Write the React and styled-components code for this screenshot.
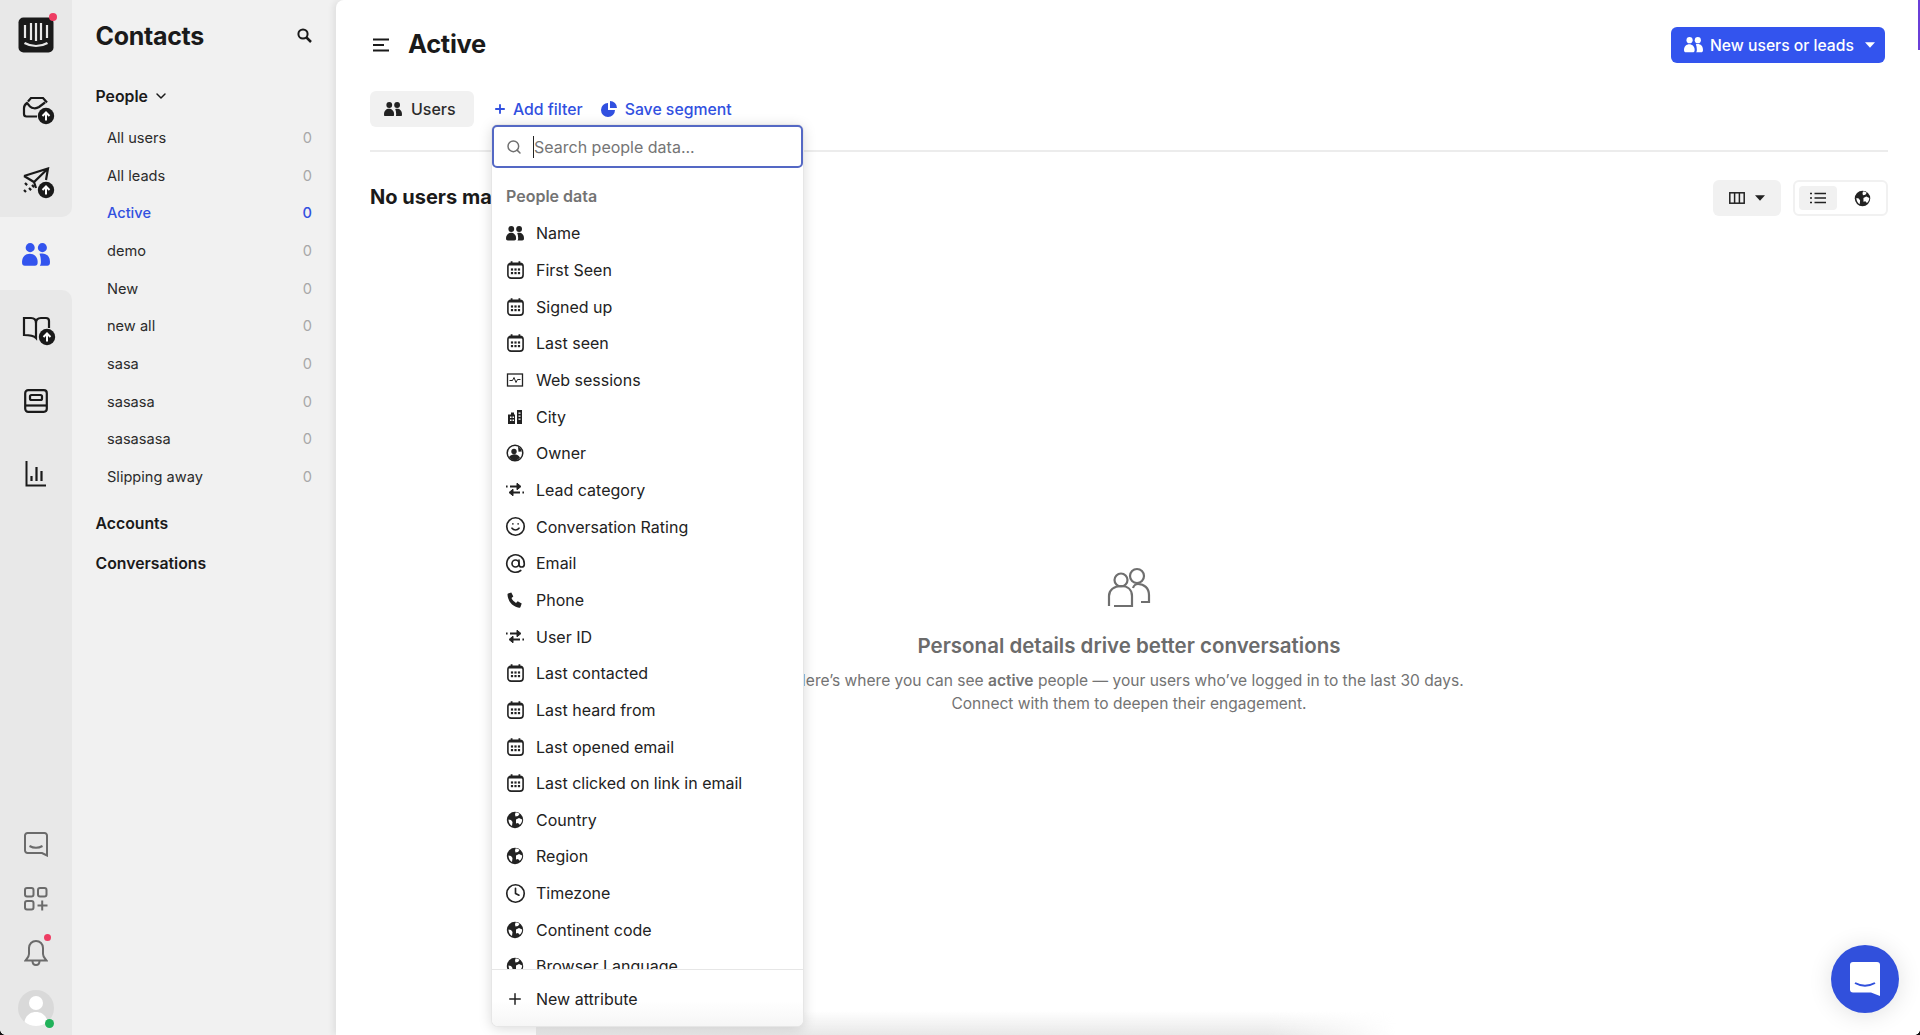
import React from "react";
import styled, { createGlobalStyle } from "styled-components";
import { Search, Plus, AtSign, Clock, Smile, ChevronDown } from "lucide-react";

const INK = "#1a1a1a";
const BLUE = "#3150e0";

const Global = createGlobalStyle`
    html, body {
        margin: 0;
        padding: 0;
        background: #fff;
    }
    body {
        font-family: Inter, "Liberation Sans", sans-serif;
        color: ${INK};
        -webkit-font-smoothing: antialiased;
    }
    * { box-sizing: border-box; }
`;

const Page = styled.div`
    position: relative;
    display: flex;
    width: 1920px;
    height: 1035px;
    overflow: hidden;
    background: #f1f1f1;
`;

/* left icon rail */
const Rail = styled.nav`
    display: flex;
    flex-direction: column;
    width: 72px;
    flex: none;
    background: #f1f1f1;
`;

const RailTop = styled.div`
    height: 217px;
    flex: none;
    display: flex;
    flex-direction: column;
    background: #e8e8e8;
    border-bottom-right-radius: 10px;
`;

const RailLogo = styled.div`
    height: 73px;
    flex: none;
    padding-bottom: 4px;
    display: flex;
    align-items: center;
    justify-content: center;
    position: relative;
`;

const RailItem = styled.div`
    height: ${(p) => p.$h || 72}px;
    flex: none;
    padding: ${(p) => p.$pad || 0};
    display: flex;
    align-items: center;
    justify-content: center;
    color: ${INK};
`;

const RailActive = styled(RailItem)`
    height: 73px;
    padding-top: 2px;
    background: #f1f1f1;
`;

const RailRest = styled.div`
    flex: 1;
    display: flex;
    flex-direction: column;
    background: #e8e8e8;
    border-top-right-radius: 10px;
`;

const RailSpacer = styled.div`
    flex: 1;
`;

const RailFoot = styled.div`
    display: flex;
    flex-direction: column;
    align-items: center;
    color: #6b6b6b;
`;

const FootItem = styled.div`
    position: relative;
    height: 54.5px;
    width: 100%;
    display: flex;
    align-items: center;
    justify-content: center;
`;

const Dot = styled.span`
    position: absolute;
    width: ${(p) => p.$size || 8}px;
    height: ${(p) => p.$size || 8}px;
    border-radius: 50%;
    background: ${(p) => p.$color || "#ee3d63"};
    top: ${(p) => p.$top}px;
    left: ${(p) => p.$left}px;
`;

const Avatar = styled.div`
    width: 36px;
    height: 36px;
    border-radius: 50%;
    background: #d9d9d9;
    overflow: hidden;
`;

/* contacts sidebar */
const Side = styled.aside`
    width: 264px;
    flex: none;
    padding: 0 24px 0 23.5px;
    background: #f1f1f1;
`;

const SideHead = styled.div`
    height: 71px;
    display: flex;
    align-items: center;
    justify-content: space-between;
    color: ${INK};
`;

const SideTitle = styled.h1`
    margin: 0;
    font-size: 25px;
    font-weight: 700;
    letter-spacing: -0.3px;
`;

const Group = styled.div`
    display: flex;
    align-items: center;
    gap: 5px;
    font-size: 15.8px;
    font-weight: 600;
    height: ${(p) => p.$h || 40}px;
`;

const SegList = styled.ul`
    list-style: none;
    margin: -2px 0 8px;
    padding: 0 0 0 11.5px;
`;

const Seg = styled.li`
    height: 37.7px;
    display: flex;
    align-items: center;
    justify-content: space-between;
    font-size: 14.6px;
    color: ${(p) => (p.$active ? BLUE : "#2b2b2b")};
    font-weight: ${(p) => (p.$active ? 500 : 400)};
`;

const Count = styled.span`
    color: ${(p) => (p.$active ? BLUE : "#a8a8a8")};
`;

/* main pane */
const Main = styled.main`
    position: relative;
    flex: 1;
    min-width: 0;
    background: #fff;
    padding: 27px 32px 0 34px;
    border-top-left-radius: 8px;
    box-shadow: -3px 0 6px rgba(0, 0, 0, 0.07);
`;

const TopBar = styled.div`
    display: flex;
    align-items: center;
    height: 36px;
`;

const MenuToggle = styled.svg`
    flex: none;
    margin-left: 3px;
`;

const PageTitle = styled.h2`
    margin: 0 0 3px 19px;
    font-size: 25.5px;
    font-weight: 700;
    letter-spacing: -0.3px;
    flex: 1;
`;

const PrimaryButton = styled.button`
    display: flex;
    align-items: center;
    height: 36px;
    width: 214px;
    margin-right: 3px;
    padding: 0 0 0 13px;
    gap: 7px;
    border: 0;
    border-radius: 6px;
    background: #3354ee;
    color: #fff;
    font: 500 15.7px Inter, sans-serif;
    svg:last-child {
        margin-left: 4px;
    }
`;

const FilterBar = styled.div`
    display: flex;
    align-items: center;
    margin-top: 28px;
    height: 36px;
`;

const UsersPill = styled.div`
    display: flex;
    align-items: center;
    gap: 9px;
    width: 104px;
    height: 36px;
    padding-left: 14px;
    border-radius: 6px;
    background: #f1f1f1;
    font-size: 16px;
    font-weight: 500;
    color: #2b2b2b;
`;

const LinkButton = styled.div`
    display: flex;
    align-items: center;
    gap: ${(p) => p.$gap || 6}px;
    margin-left: ${(p) => p.$ml}px;
    color: ${BLUE};
    font-size: 15.8px;
    font-weight: 500;
`;

const Rule = styled.div`
    height: 2px;
    margin: 23px 0 0;
    background: #ececec;
`;

const ResultBar = styled.div`
    display: flex;
    align-items: center;
    margin-top: 28px;
    height: 36px;
`;

const NoUsers = styled.div`
    flex: 1;
    padding-bottom: 2px;
    font-size: 20px;
    font-weight: 700;
    color: ${INK};
`;

const ColumnsButton = styled.div`
    display: flex;
    align-items: center;
    justify-content: center;
    gap: 10px;
    width: 68px;
    height: 36px;
    border-radius: 6px;
    background: #f1f1f1;
`;

const ViewSwitch = styled.div`
    display: flex;
    align-items: center;
    width: 95px;
    height: 36px;
    margin-left: 12px;
    padding: 0 4px;
    border: 2px solid #f1f1f1;
    border-radius: 6px;
`;

const ViewOption = styled.div`
    width: 38px;
    height: 24px;
    display: flex;
    align-items: center;
    justify-content: center;
    border-radius: 4px;
    background: ${(p) => (p.$active ? "#f1f1f1" : "transparent")};
    margin-right: ${(p) => p.$mr || 0}px;
`;

const Empty = styled.section`
    margin-top: 351px;
    display: flex;
    flex-direction: column;
    align-items: center;
    text-align: center;
    color: #737373;
`;

const EmptyTitle = styled.h3`
    margin: 26px 0 0;
    font-size: 20.5px;
    font-weight: 600;
    color: #6b6b6b;
`;

const EmptyText = styled.p`
    margin: 11px 0 0;
    font-size: 15.55px;
    line-height: 23px;
    b {
        font-weight: 600;
    }
`;

/* people data dropdown */
const Popover = styled.div`
    position: absolute;
    left: 156px;
    top: 125px;
    width: 311px;
    height: 901px;
    display: flex;
    flex-direction: column;
    background: #fff;
    border-radius: 6px;
    box-shadow: 0 0 0 1px #e6e6e6, 0 2px 14px rgba(0, 0, 0, 0.17);
`;

const SearchBox = styled.div`
    flex: none;
    display: flex;
    align-items: center;
    height: 43px;
    padding-left: 11.5px;
    border: 2px solid #5468c4;
    border-radius: 5px;
    color: #6f6f6f;
`;

const Caret = styled.span`
    width: 1.5px;
    height: 22px;
    margin-left: 11px;
    background: #222;
`;

const SearchInput = styled.input`
    flex: 1;
    min-width: 0;
    border: 0;
    outline: 0;
    padding: 0;
    background: transparent;
    font: 400 16px Inter, sans-serif;
    color: #222;
    &::placeholder {
        color: #757575;
    }
`;

const PopScroll = styled.div`
    flex: 1;
    min-height: 0;
    overflow: hidden;
    padding: 16px 0 0 14px;
`;

const PopHeading = styled.div`
    height: 24px;
    display: flex;
    align-items: center;
    font-size: 16px;
    font-weight: 600;
    color: #737373;
    margin-bottom: 7px;
`;

const PopRow = styled.div`
    display: flex;
    align-items: center;
    height: 36.67px;
    gap: 12px;
    font-size: 16px;
    color: #222;
`;

const IconSlot = styled.span`
    flex: none;
    width: 18px;
    height: 18px;
    display: flex;
    align-items: center;
    justify-content: center;
    svg {
        flex: none;
    }
`;

const PopFoot = styled.div`
    flex: none;
    height: 57px;
    padding: 1px 0 0 14px;
    display: flex;
    align-items: center;
    gap: 12px;
    border-top: 1px solid #e6e6e6;
    font-size: 16px;
    color: #222;
    background: linear-gradient(#fff 55%, #f6f6f6);
    border-radius: 0 0 6px 6px;
`;

const BottomGlow = styled.div`
    position: absolute;
    left: 200px;
    width: 860px;
    bottom: 0;
    height: 24px;
    background: linear-gradient(transparent, #e8e8e8);
    mask-image: linear-gradient(to right, #000 85%, transparent);
    pointer-events: none;
`;

const Launcher = styled.div`
    position: absolute;
    right: 21px;
    bottom: 22px;
    width: 68px;
    height: 68px;
    display: flex;
    align-items: center;
    justify-content: center;
    border-radius: 50%;
    background: #3150dc;
    box-shadow: 0 2px 24px rgba(0, 0, 0, 0.12);
`;

const Corner = styled.span`
    position: absolute;
    bottom: 0;
    ${(p) => (p.$right ? "right: 0;" : "left: 0;")}
    width: 5px;
    height: 5px;
    background: ${(p) =>
        p.$right
            ? "radial-gradient(circle at 0 0, transparent 4.5px, #111 5px)"
            : "radial-gradient(circle at 100% 0, transparent 4.5px, #111 5px)"};
`;

const AccentLine = styled.span`
    position: absolute;
    top: 0;
    right: 0;
    width: 2px;
    height: 50px;
    background: #6a3fd8;
`;

function PeopleIcon({ size = 18, color = "currentColor" }) {
    return (
        <svg width={size} height={size * 0.83} viewBox="0 0 24 20" fill={color}>
            <circle cx="7" cy="4" r="3.9" />
            <circle cx="17.5" cy="4" r="3.9" />
            <path d="M0 16c0-4 3-6.8 6.6-6.8s6.8 2.8 6.8 6.8v1.2c0 1.4-.9 2.3-2.3 2.3H2.3C.9 19.5 0 18.6 0 17.2z" />
            <path d="M15 9.3c.8-.2 1.6-.3 2.4-.3 3.8 0 6.6 2.8 6.6 6.8v1.4c0 1.4-.9 2.3-2.3 2.3H15.3c.6-.7.9-1.5.9-2.4v-1.5c0-2.4-.5-4.6-1.2-6.3z" />
        </svg>
    );
}

function Calendar() {
    return (
        <svg width="17" height="18" viewBox="0 0 17 18" fill="none" stroke="#222">
            <rect x=".9" y="2.4" width="15.2" height="14.7" rx="3.2" strokeWidth="1.6" />
            <path d="M4.6 .3v2.5M12.4 .3v2.5M2 3.6h13" strokeWidth="1.8" />
            <g fill="#222" stroke="none">
                <rect x="3.9" y="7.4" width="2.2" height="2.2" />
                <rect x="7.4" y="7.4" width="2.2" height="2.2" />
                <rect x="10.9" y="7.4" width="2.2" height="2.2" />
                <rect x="3.9" y="11" width="2.2" height="2.2" />
                <rect x="7.4" y="11" width="2.2" height="2.2" />
                <rect x="10.9" y="11" width="2.2" height="2.2" />
            </g>
        </svg>
    );
}

function Pulse() {
    return (
        <svg width="18" height="18" viewBox="0 0 18 18" fill="none" stroke="#222">
            <rect x="1.5" y="3" width="15" height="12" strokeWidth="1.3" />
            <path d="M3.5 9.5h3l1.500-3 2 5 1.500-3h3" strokeWidth="1" />
        </svg>
    );
}

function City() {
    return (
        <svg width="18" height="18" viewBox="0 0 18 18" fill="#222">
            <path d="M2 6.5h3V4.5h3v2h1V16H2zM11 2h5v14h-5z" />
            <g fill="#fff">
                <rect x="4" y="8.5" width="1.5" height="1.5" />
                <rect x="6.5" y="8.5" width="1.5" height="1.5" />
                <rect x="4" y="11.5" width="1.5" height="1.5" />
                <rect x="6.5" y="11.5" width="1.5" height="1.5" />
                <rect x="12.5" y="4.5" width="2" height="1.3" />
                <rect x="12.5" y="7.5" width="2" height="1.3" />
                <rect x="12.5" y="10.5" width="2" height="1.3" />
            </g>
        </svg>
    );
}

function Owner() {
    return (
        <svg width="18" height="18" viewBox="0 0 18 18">
            <circle cx="9" cy="9" r="7.8" fill="none" stroke="#222" strokeWidth="1.5" />
            <circle cx="8" cy="7.5" r="2.7" fill="#222" />
            <path d="M3 13c1.5-2 3.5-2.8 5.5-2.800S12.5 11 14 13.5C12.5 15.5 10.5 16.5 9 16.5S4.500 15.5 3 13z" fill="#222" />
            <path d="M12 2.5a7 7 0 0 1 3.500 5l-3 .2z" fill="#222" />
        </svg>
    );
}

function Swap() {
    return (
        <svg width="18" height="15" viewBox="0 0 18 15" fill="#222" stroke="#222" strokeWidth="2">
            <path d="M4 4.5h8" fill="none" />
            <path d="M11 1.2v6.6l4-3.300z" strokeWidth="1" />
            <path d="M14 10.5H6" fill="none" />
            <path d="M7 7.2v6.6l-4-3.300z" strokeWidth="1" />
            <path d="M0 4.5h1.600M16.400 10.5H18" fill="none" />
        </svg>
    );
}

function Phone() {
    return (
        <svg width="18" height="18" viewBox="0 0 18 18" fill="#222">
            <path d="M2 2.5 5.300 1.5l2 4-1.800 1.600c.8 2 2.400 3.700 4.500 4.800l1.700-1.700 4 2.200-1.200 3.500c-.3.7-.9.9-1.500.8C6.800 15.700 2 10.500 1.500 3.800c0-.6.1-1.100.5-1.300z" />
        </svg>
    );
}

function Globe({ size = 18 }) {
    return (
        <svg width={size} height={size} viewBox="0 0 18 18">
            <circle cx="9" cy="9" r="8.2" fill="#222" />
            <path d="M9.5 1.5c1.5 0 3 .5 4 1.400L12 5 9.500 5.500 9 3.500zM10 8.500l3-1.500 3.200 1.500c0 2-1 4-2.500 5.200L12 12l-2 .5zM2.500 8.500 5 9l1.500 2-.5 4C4 14 2.500 11.500 2.500 8.500z" fill="#fff" />
        </svg>
    );
}

function PieIcon() {
    return (
        <svg width="16" height="16" viewBox="0 0 16 16" fill={BLUE}>
            <path d="M7 2a7 7 0 1 0 7 7H7z" />
            <path d="M9 0a7 7 0 0 1 7 7H9z" />
        </svg>
    );
}

function SmallSearch() {
    return (
        <svg width="15" height="15" viewBox="0 0 15 15" fill="none" stroke={INK}>
            <circle cx="6" cy="6" r="4.6" strokeWidth="2" />
            <path d="M9.5 9.5 14 14" strokeWidth="2.5" />
        </svg>
    );
}

function Caret8({ color = "#222", w = 10 }) {
    return (
        <svg width={w} height={w * 0.6} viewBox="0 0 10 6" fill={color}>
            <path d="M0 .2h10L5 5.8z" />
        </svg>
    );
}

function UpBadge({ cx, cy }) {
    return (
        <g>
            <circle cx={cx} cy={cy} r="8.2" fill={INK} stroke="none" />
            <path d={`M${cx} ${cy + 4.5}v-8M${cx - 3.5} ${cy}l3.500-3.500 3.500 3.500`} stroke="#fff" strokeWidth="2" fill="none" />
        </g>
    );
}

function InboxIcon() {
    return (
        <svg width="34" height="30" viewBox="0 0 34 30" fill="none" stroke={INK} strokeWidth="2.2">
            <path d="M6 5.5 9 2h12l4 4.500M2 12c0-2 1-3.500 3-5l3 3.500c2 2 6 2.500 9 .5l6-4.500M2 12v6c0 1.500 1 2.500 2.500 2.500H15" />
            <UpBadge cx={24} cy={20} />
        </svg>
    );
}

function OutboundIcon() {
    return (
        <svg width="34" height="32" viewBox="0 0 34 32" fill="none" stroke={INK} strokeWidth="2.2">
            <path d="M2 9 26 1.500 24 13M2 9 12 15l14-13.500M12 15l2 6" />
            <path d="M3 16l3 3M7 21l3 3M2 23l2 2M10 18l3 3" strokeDasharray="3 2" />
            <UpBadge cx={24} cy={23} />
        </svg>
    );
}

function BookIcon() {
    return (
        <svg width="34" height="30" viewBox="0 0 34 30" fill="none" stroke={INK} strokeWidth="2.2">
            <path d="M2 2h7c3 0 5 2 5 5v15c-2-2-5-3-12-3z" />
            <path d="M14 7c0-3 2-5 5-5h5c2 0 3 1 3 3v7" />
            <UpBadge cx={25} cy={21} />
        </svg>
    );
}

function NoteIcon() {
    return (
        <svg width="24" height="24" viewBox="0 0 24 24" fill="none" stroke={INK} strokeWidth="2.2">
            <rect x="1.2" y="1.2" width="21.6" height="21.6" rx="3" />
            <rect x="6" y="6" width="12" height="5" rx="1.5" />
            <path d="M1.5 16.5h21" />
        </svg>
    );
}

function ChartIcon() {
    return (
        <svg width="22" height="26" viewBox="0 0 22 26" fill="none" stroke={INK} strokeWidth="2">
            <path d="M1.5 0v24.5H21" />
            <path d="M6.5 20v-5M11.5 20V6M16.5 20V10" strokeWidth="2.2" />
        </svg>
    );
}

function ChatIcon() {
    return (
        <svg width="24" height="25" viewBox="0 0 24 25" fill="none" stroke="#6b6b6b" strokeWidth="2">
            <path d="M3.5 1h17A2.500 2.500 0 0 1 23 3.500V23.500l-5-2.500H3.500A2.500 2.500 0 0 1 1 18.500v-15A2.500 2.500 0 0 1 3.500 1z" />
            <path d="M5.5 14c4 2.200 9 2.200 13 0" />
        </svg>
    );
}

function AppsIcon() {
    return (
        <svg width="24" height="24" viewBox="0 0 24 24" fill="none" stroke="#6b6b6b" strokeWidth="2">
            <rect x="1" y="1" width="8.5" height="8.5" rx="2" />
            <rect x="14" y="1" width="8.5" height="8.5" rx="2" />
            <rect x="1" y="14" width="8.5" height="8.5" rx="2" />
            <path d="M18.2 13.5v10M13.5 18.5h10" />
        </svg>
    );
}

function BellIcon() {
    return (
        <svg width="24" height="26" viewBox="0 0 24 26" fill="none" stroke="#6b6b6b" strokeWidth="2">
            <path d="M12 1c-4 0-7 3-7 7v6c0 3-2 4.500-3.500 6.500h21C21 18.500 19 17 19 14V8c0-4-3-7-7-7z" />
            <path d="M8.5 21c0 2.500 1.500 4 3.500 4s3.500-1.500 3.500-4" />
        </svg>
    );
}

const ROWS = [
    ["Name", "people"], ["First Seen", "cal"], ["Signed up", "cal"], ["Last seen", "cal"],
    ["Web sessions", "pulse"], ["City", "city"], ["Owner", "owner"], ["Lead category", "swap"],
    ["Conversation Rating", "smile"], ["Email", "at"], ["Phone", "phone"], ["User ID", "swap"],
    ["Last contacted", "cal"], ["Last heard from", "cal"], ["Last opened email", "cal"],
    ["Last clicked on link in email", "cal"], ["Country", "globe"], ["Region", "globe"],
    ["Timezone", "clock"], ["Continent code", "globe"], ["Browser Language", "globe"],
];

const SEGMENTS = ["All users", "All leads", "Active", "demo", "New", "new all", "sasa", "sasasa", "sasasasa", "Slipping away"];

function rowIcon(kind) {
    if (kind === "people") return <PeopleIcon size={18} color="#222" />;
    if (kind === "cal") return <Calendar />;
    if (kind === "pulse") return <Pulse />;
    if (kind === "city") return <City />;
    if (kind === "owner") return <Owner />;
    if (kind === "swap") return <Swap />;
    if (kind === "smile") return <Smile size={21} color="#222" strokeWidth={1.9} />;
    if (kind === "at") return <AtSign size={21} color="#222" strokeWidth={1.9} />;
    if (kind === "phone") return <Phone />;
    if (kind === "clock") return <Clock size={21} color="#222" strokeWidth={1.9} />;
    return <Globe />;
}

export default function App() {
    return (
        <Page>
            <Global />
            <Rail>
                <RailTop>
                    <RailLogo>
                        <svg width="36" height="36" viewBox="0 0 36 36">
                            <rect width="35" height="35" x=".5" y=".5" rx="5" fill={INK} />
                            <path d="M7 8v13M13 6v17M18 6v18M23 6v17M29 8v13" stroke="#e8e8e8" strokeWidth="2.2" />
                            <path d="M6.5 26c7 4 16 4 23 0" stroke="#e8e8e8" strokeWidth="2.2" fill="none" />
                        </svg>
                        <Dot $top={13} $left={49} />
                    </RailLogo>
                    <RailItem $pad="4px 0 0 6px"><InboxIcon /></RailItem>
                    <RailItem $pad="4px 0 0 6px"><OutboundIcon /></RailItem>
                </RailTop>
                <RailActive><PeopleIcon size={28} color="#3354ee" /></RailActive>
                <RailRest>
                    <RailItem $h={79} $pad="2px 0 0 6px"><BookIcon /></RailItem>
                    <RailItem $h={66} $pad="0 0 2px 0"><NoteIcon /></RailItem>
                    <RailItem $h={78}><ChartIcon /></RailItem>
                    <RailSpacer />
                    <RailFoot>
                        <FootItem><ChatIcon /></FootItem>
                        <FootItem><AppsIcon /></FootItem>
                        <FootItem>
                            <BellIcon />
                            <Dot $top={8} $left={44} $size={7} />
                        </FootItem>
                        <FootItem>
                            <Avatar>
                                <svg width="36" height="36" viewBox="0 0 36 36" fill="#fff">
                                    <circle cx="18" cy="13" r="7" />
                                    <path d="M6 36c0-9 5-14 12-14s12 5 12 14z" />
                                </svg>
                            </Avatar>
                            <Dot $top={38} $left={45} $size={9} $color="#20b25a" />
                        </FootItem>
                    </RailFoot>
                </RailRest>
            </Rail>

            <Side>
                <SideHead>
                    <SideTitle>Contacts</SideTitle>
                    <SmallSearch />
                </SideHead>
                <Group $h={50}>People <ChevronDown size={16} strokeWidth={2.2} /></Group>
                <SegList>
                    {SEGMENTS.map((name) => (
                        <Seg key={name} $active={name === "Active"}>
                            {name}
                            <Count $active={name === "Active"}>0</Count>
                        </Seg>
                    ))}
                </SegList>
                <Group>Accounts</Group>
                <Group>Conversations</Group>
            </Side>

            <Main>
                <BottomGlow />
                <TopBar>
                    <MenuToggle width="16" height="14" viewBox="0 0 16 14" stroke={INK} strokeWidth="2">
                        <path d="M0 1.5h16M0 7h11M0 12.5h16" />
                    </MenuToggle>
                    <PageTitle>Active</PageTitle>
                    <PrimaryButton>
                        <PeopleIcon size={19} color="#fff" />
                        New users or leads
                        <Caret8 color="#fff" />
                    </PrimaryButton>
                </TopBar>
                <FilterBar>
                    <UsersPill><PeopleIcon size={18} color="#222" /> Users</UsersPill>
                    <LinkButton $ml={19}><Plus size={14} strokeWidth={3.2} />Add filter</LinkButton>
                    <LinkButton $ml={18} $gap={8}><PieIcon />Save segment</LinkButton>
                </FilterBar>
                <Rule />
                <ResultBar>
                    <NoUsers>No users matched</NoUsers>
                    <ColumnsButton>
                        <svg width="16" height="12" viewBox="0 0 16 12" fill="none" stroke="#222" strokeWidth="1.5">
                            <rect x=".8" y=".8" width="14.4" height="10.4" />
                            <path d="M5.6 1v10M10.4 1v10" />
                        </svg>
                        <Caret8 />
                    </ColumnsButton>
                    <ViewSwitch>
                        <ViewOption $active $mr={6}>
                            <svg width="16" height="12" viewBox="0 0 16 12" fill="none" stroke="#222" strokeWidth="1.7">
                                <path d="M4.5 1.5H16M4.5 6H16M4.5 10.5H16M0 1.5h2M0 6h2M0 10.5h2" />
                            </svg>
                        </ViewOption>
                        <ViewOption><Globe size={17} /></ViewOption>
                    </ViewSwitch>
                </ResultBar>
                <Empty>
                    <svg width="44" height="40" viewBox="0 0 44 40" fill="none" stroke="#6f6f6f" strokeWidth="2.2">
                        <circle cx="14" cy="13" r="6.5" />
                        <circle cx="30" cy="9" r="7" />
                        <path d="M2 39V29c0-6 5-10 12-10s11 4 11 10v10H7" />
                        <path d="M26 21c1-3 3-4 5-4 6 0 11 4 11 11v7h-8" />
                    </svg>
                    <EmptyTitle>Personal details drive better conversations</EmptyTitle>
                    <EmptyText>
                        Here’s where you can see <b>active</b> people — your users who’ve logged in to the last 30 days.
                        <br />
                        Connect with them to deepen their engagement.
                    </EmptyText>
                </Empty>
                <Popover>
                    <SearchBox>
                        <Search size={16} strokeWidth={2.2} />
                        <Caret />
                        <SearchInput placeholder="Search people data..." readOnly />
                    </SearchBox>
                    <PopScroll>
                        <PopHeading>People data</PopHeading>
                        {ROWS.map(([label, kind]) => (
                            <PopRow key={label}><IconSlot>{rowIcon(kind)}</IconSlot>{label}</PopRow>
                        ))}
                    </PopScroll>
                    <PopFoot><IconSlot><Plus size={18} color="#222" strokeWidth={2} /></IconSlot>New attribute</PopFoot>
                </Popover>
            </Main>

            <Launcher>
                <svg width="32" height="36" viewBox="0 0 32 36">
                    <path d="M4 1h24a3 3 0 0 1 3 3v31l-9-3.500H4a3 3 0 0 1-3-3V4a3 3 0 0 1 3-3z" fill="#fff" />
                    <path d="M6 22c6 3.500 14 3.500 20 0" fill="none" stroke="#3150dc" strokeWidth="2" />
                </svg>
            </Launcher>
            <AccentLine />
            <Corner />
            <Corner $right />
        </Page>
    );
}
